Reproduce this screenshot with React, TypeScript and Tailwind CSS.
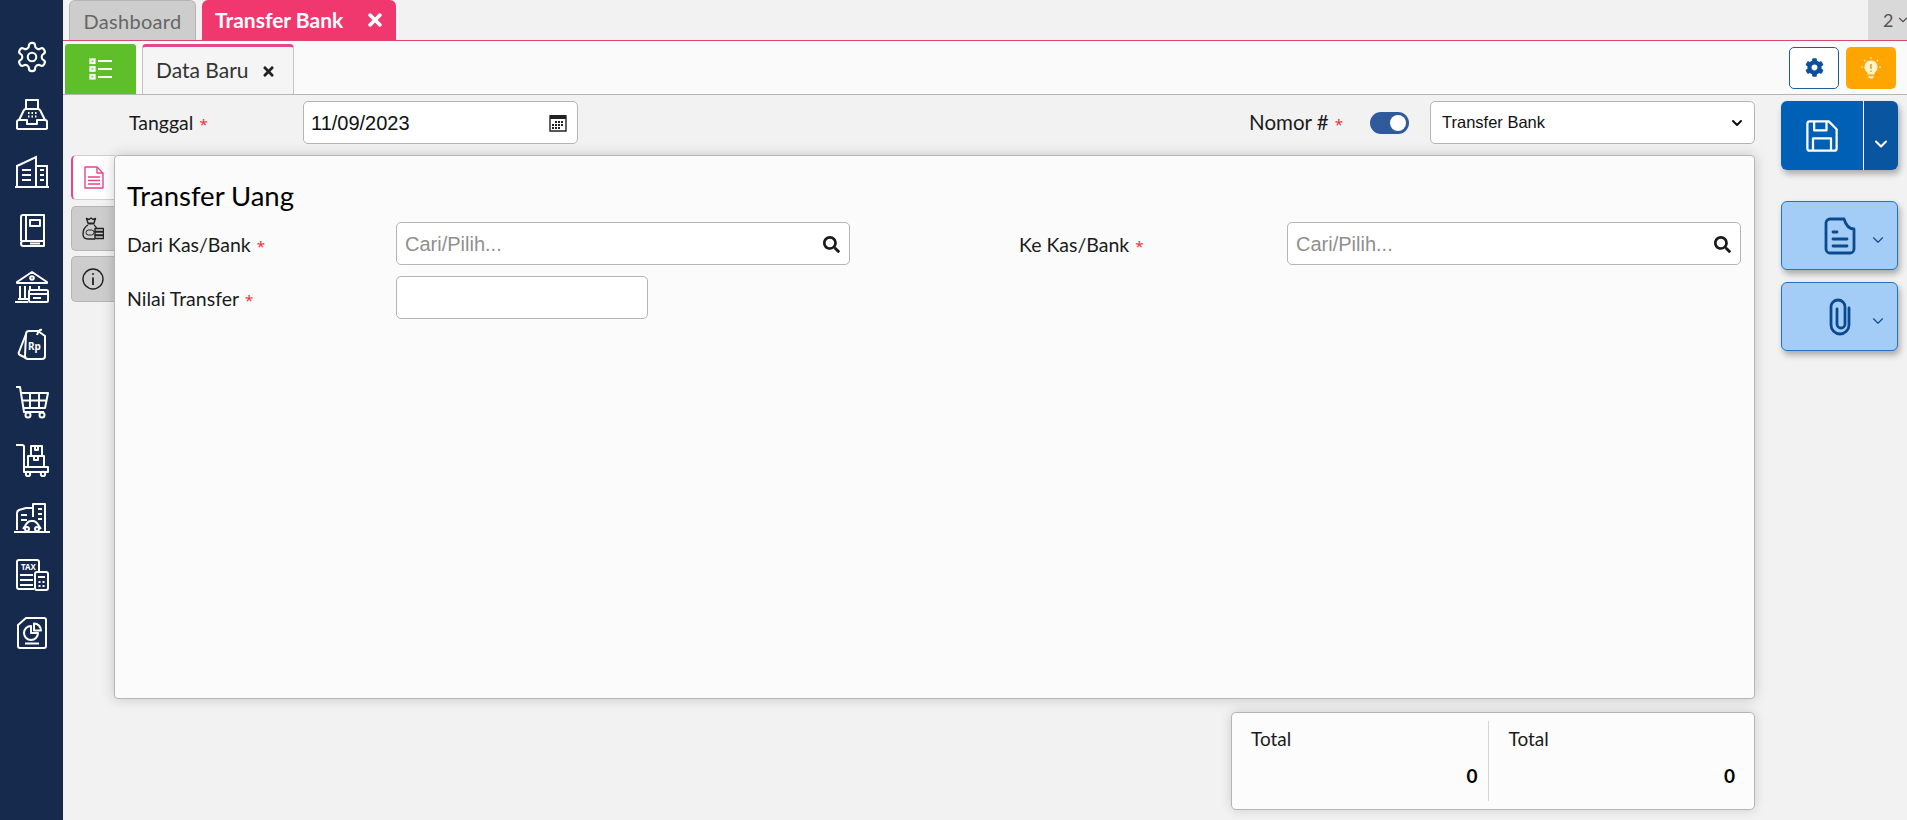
import { ChevronDown } from "lucide-react";
import { FaSearch, FaTimes, FaCog } from "react-icons/fa";

const SANS = "font-['Lato',sans-serif]";

function Gear() {
  return (
    <svg width="34" height="34" viewBox="0 0 24 24" fill="none" stroke="white" strokeWidth="1.500" strokeLinecap="round" strokeLinejoin="round">
      <path d="M12.22 2h-.44a2 2 0 0 0-2 2v.18a2 2 0 0 1-1 1.73l-.43.25a2 2 0 0 1-2 0l-.15-.08a2 2 0 0 0-2.730.73l-.22.38a2 2 0 0 0 .73 2.730l.15.1a2 2 0 0 1 1 1.720v.51a2 2 0 0 1-1 1.740l-.15.09a2 2 0 0 0-.73 2.730l.22.38a2 2 0 0 0 2.730.73l.15-.08a2 2 0 0 1 2 0l.43.25a2 2 0 0 1 1 1.730V20a2 2 0 0 0 2 2h.44a2 2 0 0 0 2-2v-.18a2 2 0 0 1 1-1.730l.43-.25a2 2 0 0 1 2 0l.15.08a2 2 0 0 0 2.730-.73l.22-.39a2 2 0 0 0-.73-2.730l-.15-.08a2 2 0 0 1-1-1.740v-.5a2 2 0 0 1 1-1.740l.15-.09a2 2 0 0 0 .73-2.730l-.22-.38a2 2 0 0 0-2.730-.73l-.15.08a2 2 0 0 1-2 0l-.43-.25a2 2 0 0 1-1-1.730V4a2 2 0 0 0-2-2z" />
      <circle cx="12" cy="12" r="3" />
    </svg>
  );
}

function Fax() {
  return (
    <svg width="34" height="33" viewBox="0 0 34 33" fill="none" stroke="white" strokeWidth="2" strokeLinejoin="round">
      <path d="M11 11V2h12v9" />
      <path d="M4 22l4-8q1-3 3-3h12q2 0 3 3l4 8" />
      <path d="M2 24q0-2 2-2h8v4h10v-4h8q2 0 2 2v6q0 1-2 1H4q-2 0-2-1z" />
      <path d="M13 15h1.500M16.500 15h1.500M20 15h1.500M13 18.500h1.500M16.500 18.500h1.500M20 18.500h1.500" strokeWidth="1.800" />
    </svg>
  );
}

function Building() {
  return (
    <svg width="34" height="34" viewBox="0 0 34 34" fill="none" stroke="white" strokeWidth="2">
      <path d="M0 32h34" />
      <path d="M2 32V11L21 2v30" />
      <path d="M21 11h11v21" />
      <path d="M7 15h9M7 20h9M7 25h9M25 15h4M25 20h4M25 25h4" />
    </svg>
  );
}

function Book() {
  return (
    <svg width="28" height="34" viewBox="0 0 28 34" fill="none" stroke="white" strokeWidth="2" strokeLinejoin="round">
      <path d="M3 28V4a2 2 0 0 1 2-2h21v26H5.500a2.500 2.500 0 0 0 0 5H26v-5" />
      <path d="M8 2v26" />
      <rect x="12" y="7" width="10" height="6" />
      <path d="M12 30.500h10" />
    </svg>
  );
}

function Bank() {
  return (
    <svg width="34" height="34" viewBox="0 0 34 34" fill="none" stroke="white" strokeWidth="2" strokeLinejoin="round">
      <path d="M2 12L17 2l15 10v1H2z" />
      <circle cx="17" cy="8" r="1.800" />
      <path d="M5 16v13M10 16v13M15 16v4M24 16v3" />
      <path d="M0 32h13M3 29h10" />
      <rect x="14" y="20" width="19" height="12" rx="1.500" />
      <path d="M14 24h19M18 28h8" />
    </svg>
  );
}

function PriceTag() {
  return (
    <svg width="30" height="33" viewBox="0 0 30 33" fill="none" stroke="white" strokeWidth="2" strokeLinejoin="round">
      <path d="M9 6L2 24q-1 2 1 3l6 3" />
      <path d="M9 6q0-3 3-3h9l7 5v20a3 3 0 0 1-3 3H11a3 3 0 0 1-3-3z" />
      <path d="M20 7q2-6 5-5" />
      <text x="11" y="22" fill="white" stroke="none" fontSize="10" fontWeight="700" fontFamily="Noto Sans, sans-serif">Rp</text>
    </svg>
  );
}

function Cart() {
  return (
    <svg width="34" height="34" viewBox="0 0 34 34" fill="none" stroke="white" strokeWidth="2" strokeLinejoin="round">
      <path d="M1 2h4l4 25h20" />
      <path d="M6 8h27l-3 15H9" />
      <path d="M15 8v15M24 8v15M7.500 15.500H32" />
      <circle cx="13" cy="30" r="2.500" />
      <circle cx="27" cy="30" r="2.500" />
    </svg>
  );
}

function Trolley() {
  return (
    <svg width="34" height="34" viewBox="0 0 34 34" fill="none" stroke="white" strokeWidth="2" strokeLinejoin="round">
      <path d="M1 2h6q2 0 2 2v20" />
      <path d="M9 24h24v5H9z" />
      <rect x="13" y="13" width="16" height="11" />
      <rect x="16" y="3" width="11" height="10" />
      <path d="M20 3v4h3V3M19 13v4h4v-4" />
      <circle cx="13" cy="31" r="2.200" />
      <circle cx="28" cy="31" r="2.200" />
    </svg>
  );
}

function City() {
  return (
    <svg width="36" height="32" viewBox="0 0 36 32" fill="none" stroke="white" strokeWidth="2" strokeLinejoin="round">
      <path d="M0 30h36" />
      <path d="M3 28V11q0-2 2-3l7-2h7v9" />
      <path d="M19 11V2h12v28" />
      <path d="M24 7h4M24 12h4M24 17h4M7 13h6M7 18h6" />
      <path d="M9 27l2-3q3-5 6-5h2q3 0 6 5l2 3" />
      <circle cx="13" cy="27" r="2" />
      <circle cx="23" cy="27" r="2" />
    </svg>
  );
}

function Tax() {
  return (
    <svg width="34" height="34" viewBox="0 0 34 34" fill="none" stroke="white" strokeWidth="2" strokeLinejoin="round">
      <path d="M19 31H4a2 2 0 0 1-2-2V4a2 2 0 0 1 2-2h18a2 2 0 0 1 2 2v9" />
      <text x="6" y="12" fill="white" stroke="none" fontSize="8" fontWeight="700" fontFamily="Noto Sans, sans-serif">TAX</text>
      <path d="M5 17h13M5 22h13M5 27h13" />
      <rect x="20" y="14" width="13" height="18" rx="2" />
      <path d="M23 19h7M23.500 24h2M27.500 24h2M23.500 28h2M27.500 28h2" />
    </svg>
  );
}

function Report() {
  return (
    <svg width="30" height="34" viewBox="0 0 30 34" fill="none" stroke="white" strokeWidth="2" strokeLinejoin="round">
      <path d="M9 2h18a2 2 0 0 1 2 2v26a2 2 0 0 1-2 2H3a2 2 0 0 1-2-2V9z" />
      <path d="M14 10a7 7 0 1 0 7 7h-7z" />
      <path d="M17 7.500a7 7 0 0 1 7 7h-7z" />
      <path d="M8 27.500h14" />
    </svg>
  );
}

function Required() {
  return <span className="font-['Noto_Sans',sans-serif] text-[#f0303a] text-[15px] ml-[6px]">*</span>;
}

function Label({ text, className }: { text: string; className: string }) {
  return (
    <div className={`text-[19.500px] text-[#1b1b1b] ${SANS} ${className}`}>
      {text}
      <Required />
    </div>
  );
}

function LookupInput({ className }: { className: string }) {
  return (
    <div className={`h-[43px] bg-white border border-[#b5b5b5] rounded-[5px] flex items-center justify-between pl-[8px] pr-[9px] ${className}`}>
      <span className="font-['Liberation_Sans',sans-serif] text-[20px] text-[#8f8f8f]">Cari/Pilih...</span>
      <FaSearch size={17} className="text-[#1a1a1a] mt-[2px]" />
    </div>
  );
}

function TotalCell({ border }: { border?: boolean }) {
  return (
    <div className={`flex-1 flex flex-col justify-between pt-[6px] pb-[13px] ${border ? "border-r border-[#d5d5d5] pl-[19px] pr-[10px]" : "pl-[20px] pr-[19px]"} ${SANS}`}>
      <div className="text-[19px] leading-[24px] text-[#1b1b1b]">Total</div>
      <div className="text-right text-[19px] leading-[24px] font-bold text-black">0</div>
    </div>
  );
}

function SideActionButton({ children }: { children: React.ReactNode }) {
  return (
    <div className="h-[69px] w-[117px] bg-[#a3cdf7] border border-[#1f74c8] rounded-[6px] shadow-[2px_4px_6px_rgba(0,0,0,0.3)] flex items-center pl-[42px] text-[#0c4a8f]">
      {children}
      <ChevronDown size={18} strokeWidth={1.500} className="ml-auto mr-[10px] mt-[8px]" />
    </div>
  );
}

export default function App() {
  const menu = [Gear, Fax, Building, Book, Bank, PriceTag, Cart, Trolley, City, Tax, Report];

  return (
    <div className="flex w-[1907px] h-[820px] overflow-hidden bg-[#f2f2f2]">
      {/* sidebar */}
      <aside className="w-[63px] shrink-0 bg-[#152a4c] flex flex-col items-center pt-[28px]">
        {menu.map((Icon, i) => (
          <div key={i} className="h-[57.600px] w-full flex items-center justify-center shrink-0">
            <Icon />
          </div>
        ))}
      </aside>

      <div className="flex-1 flex flex-col min-w-0">
        {/* tab atas */}
        <div className={`h-[41px] shrink-0 border-b border-[#d9486f] flex items-end pl-[6px] gap-[6px] ${SANS}`}>
          <div className="w-[127px] h-[40px] bg-[#cdcdcd] border border-b-0 border-[#b5b5b5] rounded-t-[6px] flex items-center justify-center text-[20px] tracking-[0.3px] text-[#666]">
            Dashboard
          </div>
          <div className="w-[194px] h-[40px] bg-[#f0386f] rounded-t-[6px] flex items-center pl-[13px] text-white text-[21px] font-bold">
            Transfer Bank
            <FaTimes size={20} className="ml-auto mr-[11px]" />
          </div>
          <div className="ml-auto w-[39px] h-[40px] bg-[#d9d9d9] flex items-center pl-[15px] gap-[3px] text-[#555] text-[18px]">
            2
            <ChevronDown size={14} className="shrink-0" />
          </div>
        </div>

        {/* toolbar */}
        <div className="h-[54px] shrink-0 bg-[#fafafa] border-b border-[#b5b5b5] flex items-end pl-[2px] gap-[6px]">
          <div className="w-[71px] h-[50px] bg-[#5fbf2a] rounded-t-[3px] flex items-center justify-center">
            <svg width="24" height="22" viewBox="0 0 24 22" fill="none" stroke="white" strokeWidth="2.200">
              <rect x="1.500" y="1.500" width="4" height="3.500" />
              <rect x="1.500" y="9.200" width="4" height="3.500" />
              <rect x="1.500" y="17" width="4" height="3.500" />
              <path d="M9 3h14M9 11h14M9 19h14" />
            </svg>
          </div>
          <div className={`w-[152px] h-[50px] bg-[#f5f5f5] border border-b-0 border-[#c4c4c4] border-t-[3px] border-t-[#e5468c] rounded-t-[4px] flex items-center pl-[13px] pb-[2px] text-[21px] text-[#333] ${SANS}`}>
            Data Baru
            <FaTimes size={15} className="ml-[12px] mt-[3px] text-[#222]" />
          </div>
          <div className="ml-auto flex gap-[7px] mr-[11px] self-center">
            <div className="w-[50px] h-[42px] bg-white border border-[#1c5f9f] rounded-[5px] flex items-center justify-center">
              <FaCog size={19} className="text-[#0d4f9c]" />
            </div>
            <div className="w-[50px] h-[42px] bg-[#ffa500] rounded-[5px] flex items-center justify-center">
              <svg width="20" height="22" viewBox="0 0 20 22" fill="none" stroke="#fff3cf" strokeWidth="1.200">
                <path d="M10 4a6 6 0 0 0-3.500 10.800q.5.5.5 1.200v1h6v-1q0-.7.5-1.200A6 6 0 0 0 10 4z" fill="#fff3cf" />
                <path d="M7.500 19.500q2.500 2 5 0" strokeWidth="1.800" />
                <path d="M10 0v2M3 3l1.300 1.300M17 3l-1.300 1.300M0 10h2M18 10h2" />
                <path d="M10 7v5M10 13.500v1.500" stroke="#e89a00" strokeWidth="1.400" />
              </svg>
            </div>
          </div>
        </div>

        {/* isi */}
        <div className="flex-1 flex pl-[8px] pt-[6px] min-h-0">
          <div className="w-[1684px] flex flex-col">
            <div className={`h-[43px] flex items-center ${SANS}`}>
              <Label text="Tanggal" className="ml-[58px] w-[174px]" />
              <div className="w-[275px] h-[43px] bg-white border border-[#b5b5b5] rounded-[5px] flex items-center justify-between pl-[7px] pr-[10px] font-['Liberation_Sans',sans-serif] text-[20px] text-[#111]">
                11/09/2023
                <svg width="18" height="18" viewBox="0 0 18 18">
                  <path d="M1 2h16v15H1z" fill="none" stroke="#222" strokeWidth="1.400" />
                  <path d="M1 1h16v4H1z" fill="#222" />
                  <path d="M6 7h2v2H6zM9 7h2v2H9zM12 7h2v2h-2zM3 10h2v2H3zM6 10h2v2H6zM9 10h2v2H9zM12 10h2v2h-2zM3 13h2v2H3zM6 13h2v2H6zM9 13h2v2H9z" fill="#222" />
                </svg>
              </div>
              <Label text="Nomor #" className="ml-auto mr-[27px] text-[20.500px]" />
              <div className="w-[39px] h-[22px] bg-[#2f5a9c] rounded-full flex items-center justify-end pr-[3px] mr-[21px]">
                <div className="w-[16px] h-[16px] bg-white rounded-full" />
              </div>
              <div className="w-[325px] h-[43px] bg-white border border-[#b5b5b5] rounded-[5px] flex items-center justify-between pl-[11px] pr-[9px] font-['Liberation_Sans',sans-serif] text-[16.500px] text-[#111]">
                Transfer Bank
                <ChevronDown size={16} strokeWidth={3} />
              </div>
            </div>

            <div className="flex mt-[11px] h-[544px]">
              <div className="w-[44px] shrink-0 flex flex-col">
                <div className="h-[45px] bg-white border-l-2 border-[#e5468c] border-y border-y-[#d0d0d0] rounded-l-[5px] flex items-center pl-[10px]">
                  <svg width="22" height="23" viewBox="0 0 22 23" fill="none" stroke="#e5468c" strokeWidth="1.400" strokeLinejoin="round">
                    <path d="M2 1h12l6 6v15H2z" />
                    <path d="M14 1v6h6M5 11h12M5 14.500h12M5 18h12" />
                  </svg>
                </div>
                <div className="h-[45px] mt-[6px] bg-[#cdcdcd] border border-r-0 border-[#b5b5b5] rounded-l-[5px] flex items-center pl-[10px]">
                  <svg width="22" height="23" viewBox="0 0 22 23" fill="none" stroke="#222" strokeWidth="1.400" strokeLinejoin="round">
                    <path d="M6 6L4.500 1.500 7 2.500 9 1l2 1.500 2.500-1L12 6" />
                    <path d="M5.500 6.500h7" strokeWidth="2" />
                    <path d="M6 8q-5 3-5 9 0 5 5 5h7" />
                    <path d="M12 8q2 1.500 3 4" />
                    <rect x="4" y="13" width="8" height="5" rx="2.500" strokeWidth="1" />
                    <rect x="13" y="11.500" width="8.500" height="3" fill="#cdcdcd" />
                    <rect x="13" y="15" width="8.500" height="3" fill="#cdcdcd" />
                    <rect x="13" y="18.500" width="8.500" height="3" fill="#cdcdcd" />
                  </svg>
                </div>
                <div className="h-[46px] mt-[5px] bg-[#cdcdcd] border border-r-0 border-[#b5b5b5] rounded-l-[5px] flex items-center pl-[10px]">
                  <svg width="22" height="22" viewBox="0 0 22 22" fill="none" stroke="#222" strokeWidth="1.400">
                    <circle cx="11" cy="11" r="10" />
                    <path d="M11 9.500V17" strokeWidth="1.800" />
                    <circle cx="11" cy="6" r="1" fill="#222" stroke="none" />
                  </svg>
                </div>
              </div>

              <section className={`flex-1 -ml-[1px] relative bg-[#fbfbfb] border border-[#b5b5b5] rounded-[4px] shadow-[0_0_14px_rgba(0,0,0,0.18)] pl-[12px] pr-[13px] ${SANS}`}>
                <h1 className="text-[27.500px] leading-[32px] text-black mt-[24px]">Transfer Uang</h1>
                <div className="flex items-center mt-[10px]">
                  <Label text="Dari Kas/Bank" className="w-[269px] mt-[2px]" />
                  <LookupInput className="w-[454px]" />
                  <Label text="Ke Kas/Bank" className="ml-[169px] w-[268px] mt-[2px]" />
                  <LookupInput className="w-[454px]" />
                </div>
                <div className="flex items-center mt-[11px]">
                  <Label text="Nilai Transfer" className="w-[269px] mt-[2px]" />
                  <div className="w-[252px] h-[43px] bg-white border border-[#b5b5b5] rounded-[5px]" />
                </div>
              </section>
            </div>

            <div className="self-end mt-[13px] w-[524px] h-[98px] bg-[#fcfcfc] border border-[#b5b5b5] rounded-[5px] shadow-[0_0_12px_rgba(0,0,0,0.15)] flex py-[8px]">
              <TotalCell border />
              <TotalCell />
            </div>
          </div>

          {/* tombol kanan */}
          <div className="ml-[26px] flex flex-col">
            <div className="h-[69px] w-[117px] flex rounded-[6px] overflow-hidden shadow-[2px_4px_6px_rgba(0,0,0,0.3)] text-white">
              <div className="w-[83px] bg-[#0060b6] flex items-center justify-center border-r border-white">
                <svg width="36" height="36" viewBox="0 0 32 32" fill="none" stroke="white" strokeWidth="2" strokeLinejoin="round">
                  <path d="M3 5a2 2 0 0 1 2-2h17l7 7v17a2 2 0 0 1-2 2H5a2 2 0 0 1-2-2z" />
                  <path d="M9 3v8h11V3M8 29V18h16v11" />
                </svg>
              </div>
              <div className="flex-1 bg-[#0a559f] flex items-center justify-center">
                <ChevronDown size={20} strokeWidth={2.500} className="mt-[16px]" />
              </div>
            </div>

            <div className="mt-[31px] flex flex-col gap-[12px]">
              <SideActionButton>
                <svg width="32" height="38" viewBox="0 0 32 38" fill="none" stroke="currentColor" strokeWidth="2.800" strokeLinejoin="round" strokeLinecap="round">
                  <path d="M20 2H6a4 4 0 0 0-4 4v26a4 4 0 0 0 4 4h20a4 4 0 0 0 4-4V12q-7 0-10-10z" />
                  <path d="M9 15h4M9 22h14M9 29h14" />
                </svg>
              </SideActionButton>
              <SideActionButton>
                <svg width="24" height="38" viewBox="0 0 24 38" fill="none" stroke="currentColor" strokeWidth="2.800" strokeLinecap="round" className="ml-[4px]">
                  <path d="M21 10v17a9 9 0 0 1-18 0V9a7 7 0 0 1 14 0v17a4 4 0 0 1-8 0V11" />
                </svg>
              </SideActionButton>
            </div>
          </div>
        </div>
      </div>
    </div>
  );
}
